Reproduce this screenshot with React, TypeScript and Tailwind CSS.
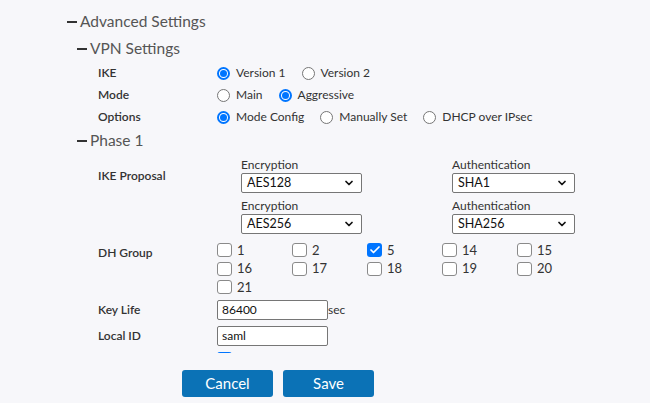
import React from 'react';
import { ChevronDown, Check } from 'lucide-react';

type Opt = { label: string; checked?: boolean };

const Radio: React.FC<{ checked?: boolean }> = ({ checked }) =>
  checked ? (
    <span className="flex h-[13px] w-[13px] shrink-0 rounded-full border-2 border-[#0075ff] bg-white p-[1px]">
      <span className="h-full w-full rounded-full bg-[#0075ff]" />
    </span>
  ) : (
    <span className="h-[13px] w-[13px] shrink-0 rounded-full border border-[#767676] bg-white" />
  );

const Checkbox: React.FC<{ checked?: boolean }> = ({ checked }) =>
  checked ? (
    <span className="flex h-[14px] w-[15px] shrink-0 items-center justify-center rounded-[3px] bg-[#0075ff]">
      <Check size={12} strokeWidth={3.5} color="#fff" />
    </span>
  ) : (
    <span className="h-[14px] w-[15px] shrink-0 rounded-[3px] border border-[#8a8a8a] bg-white" />
  );

const Section: React.FC<{ title: string; className?: string }> = ({ title, className }) => (
  <div className={`flex items-center ${className ?? ''}`}>
    <span className="mr-[3px] h-[2px] w-[10px] bg-[#333]" />
    <span className="text-[15.5px] text-[#555]">{title}</span>
  </div>
);

const RadioRow: React.FC<{ label: string; options: Opt[] }> = ({ label, options }) => (
  <div className="flex h-[22px] items-center">
    <div className="w-[119px] font-semibold text-[#333]">{label}</div>
    <div className="flex items-center gap-4">
      {options.map((o) => (
        <label key={o.label} className="flex items-center gap-[6px] text-[#333]">
          <Radio checked={o.checked} />
          {o.label}
        </label>
      ))}
    </div>
  </div>
);

const Select: React.FC<{ value: string; width: string }> = ({ value, width }) => (
  <div className={`flex h-[20px] ${width} items-center justify-between rounded-[2px] border border-[#767676] bg-white pl-[5px] pr-[6px] text-[12.5px] text-[#111]`}>
    <span>{value}</span>
    <ChevronDown size={12} strokeWidth={3.5} color="#111" />
  </div>
);

const Proposal: React.FC<{ enc: string; auth: string }> = ({ enc, auth }) => (
  <div className="flex">
    <div className="w-[211px]">
      <div className="h-[20px] leading-[24px] text-[#333]">Encryption</div>
      <Select value={enc} width="w-[121px]" />
    </div>
    <div>
      <div className="h-[20px] leading-[24px] text-[#333]">Authentication</div>
      <Select value={auth} width="w-[123px]" />
    </div>
  </div>
);

const dhGroups = [1, 2, 5, 14, 15, 16, 17, 18, 19, 20, 21];

export default function App() {
  return (
    <div className="flex h-[403px] w-[650px] flex-col bg-[#f7f7fa] text-[12px]" style={{ fontFamily: 'Lato, "Noto Sans", sans-serif' }}>
      <div className="h-[353px] overflow-hidden pl-[67px] pt-[9px]">
        <Section title="Advanced Settings" className="h-[26px]" />
        <div className="pl-[10px]">
          <Section title="VPN Settings" className="h-[27px]" />
          <div className="pl-[21px]">
            <RadioRow label="IKE" options={[{ label: 'Version 1', checked: true }, { label: 'Version 2' }]} />
            <RadioRow label="Mode" options={[{ label: 'Main' }, { label: 'Aggressive', checked: true }]} />
            <RadioRow label="Options" options={[{ label: 'Mode Config', checked: true }, { label: 'Manually Set' }, { label: 'DHCP over IPsec' }]} />
          </div>
          <Section title="Phase 1" className="h-[25px]" />
          <div className="pl-[21px]">
            <div className="flex">
              <div className="w-[143px] pt-[14px] font-semibold text-[#333]">IKE Proposal</div>
              <div className="flex flex-col gap-[1px]">
                <Proposal enc="AES128" auth="SHA1" />
                <Proposal enc="AES256" auth="SHA256" />
              </div>
            </div>

            <div className="mt-[7px] flex">
              <div className="w-[119px] pt-[3px] font-semibold text-[#333]">DH Group</div>
              <div className="grid w-[375px] grid-cols-5">
                {dhGroups.map((n) => (
                  <label key={n} className="flex h-[18.5px] items-center gap-[5px] text-[13px] text-[#333]">
                    <Checkbox checked={n === 5} />
                    {n}
                  </label>
                ))}
              </div>
            </div>

            <div className="mt-[3px] flex h-[20px] items-center">
              <div className="w-[119px] font-semibold text-[#333]">Key Life</div>
              <div className="flex h-[20px] w-[111px] items-center rounded-[2px] border border-[#767676] bg-white px-[4px] text-[#111]">86400</div>
              <span className="text-[#333]">sec</span>
            </div>
            <div className="mt-[6px] flex h-[20px] items-center">
              <div className="w-[119px] font-semibold text-[#333]">Local ID</div>
              <div className="flex h-[20px] w-[111px] items-center rounded-[2px] border border-[#767676] bg-white px-[4px] text-[#111]">saml</div>
            </div>
            <div className="mt-[6px] flex">
              <div className="w-[119px]" />
              <Checkbox checked />
            </div>
          </div>
        </div>
      </div>
      <div className="flex gap-[10px] pl-[182px] pt-[17px]">
        <button className="h-[27px] w-[91px] rounded-[3px] bg-[#0b72b6] text-[15px] text-white">Cancel</button>
        <button className="h-[27px] w-[91px] rounded-[3px] bg-[#0b72b6] text-[15px] text-white">Save</button>
      </div>
    </div>
  );
}
